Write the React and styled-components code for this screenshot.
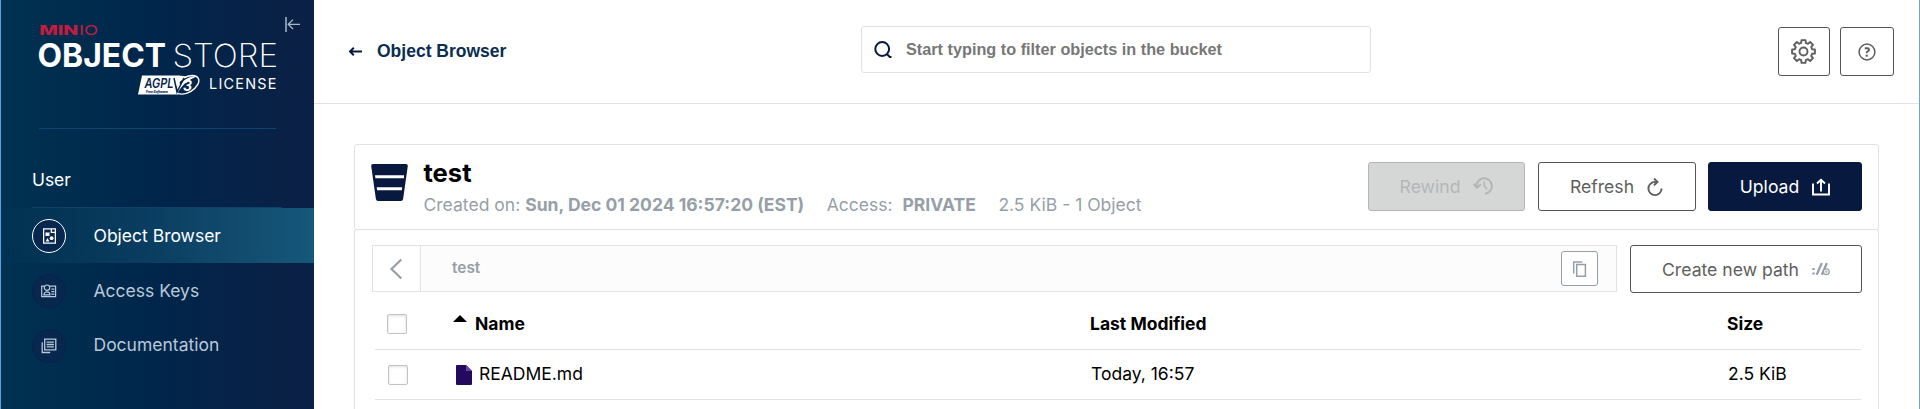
import React from 'react';
import styled, { createGlobalStyle } from 'styled-components';

const Global = createGlobalStyle`
  * { box-sizing: border-box; }
  body { margin: 0; font-family: Inter, sans-serif; font-size: 17.5px; overflow: hidden; background: #fff; }
  button, input { font: inherit; }
`;

const Page = styled.div`
  display: flex;
  height: 409px;
  border-left: 1px solid #4da5e8;
  border-right: 1px solid #6ba6d8;
`;

const Sidebar = styled.aside`
  width: 313px;
  flex: none;
  display: flex;
  flex-direction: column;
  background: linear-gradient(90deg, #003250 0%, #00264b 48%, #0b2044 100%);
`;

const Brand = styled.div`
  height: 129px;
  margin: 0 38px;
  border-bottom: 1px solid #0d4572;
  position: relative;
`;

const LogoSvg = styled.svg`
  display: block;
  overflow: visible;
`;

const Collapse = styled.svg`
  position: absolute;
  left: 246px;
  top: 17px;
`;

const SectionTitle = styled.div`
  height: 79px;
  margin: 0 32px 0 31px;
  padding-top: 40px;
  line-height: 22px;
  font-size: 17.4px;
  color: #fff;
  border-bottom: 1px solid #123f6c;
`;

const NavItem = styled.a`
  height: 55px;
  display: flex;
  align-items: center;
  gap: 27.5px;
  padding-left: 31px;
  font-size: 17.5px;
  color: ${(p) => (p.$active ? '#fff' : '#b8c8d8')};
  background: ${(p) => (p.$active ? 'linear-gradient(90deg, rgba(21,87,122,0) 0%, #15587a 100%)' : 'none')};
`;

const NavLabel = styled.span`
  padding-bottom: ${(p) => (p.$raised ? 2 : 0)}px;
`;

const NavIcon = styled.span`
  width: 34px;
  height: 34px;
  display: grid;
  place-items: center;
  border-radius: 50%;
  background: #07274e;
  border: 1px solid ${(p) => (p.$active ? '#fff' : '#08234a')};
`;

const Main = styled.main`
  flex: 1;
  min-width: 0;
  display: flex;
  flex-direction: column;
`;

const TopBar = styled.header`
  height: 104px;
  flex: none;
  display: grid;
  grid-template-columns: 547px 510px 1fr;
  align-items: start;
  border-bottom: 1px solid #e2e2e2;
`;

const PageTitle = styled.div`
  display: flex;
  align-items: center;
  gap: 15px;
  padding: 39px 0 0 34px;
  font: bold 17.5px/24px 'Liberation Sans', sans-serif;
  color: #0b2d50;
`;

const Search = styled.label`
  height: 47px;
  margin-top: 26px;
  display: flex;
  align-items: center;
  gap: 14px;
  padding: 0 12px;
  border: 1px solid #e2e2e2;
  border-radius: 3px;
`;

const SearchInput = styled.input`
  flex: 1;
  border: 0;
  padding: 0;
  outline: 0;
  font: bold 16.25px 'Liberation Sans', sans-serif;
  &::placeholder { color: #777; opacity: 1; }
`;

const TopActions = styled.div`
  display: flex;
  justify-content: flex-end;
  gap: 10px;
  padding: 27px 25px 0 0;
`;

const palette = {
  plain: { edge: '#545454', fill: '#fff', ink: '#5e5e5e' },
  disabled: { edge: '#b4b6b6', fill: '#d5d7d7', ink: '#b4b6b6' },
  primary: { edge: '#07193e', fill: '#07193e', ink: '#fff' },
};

const Button = styled.button`
  width: ${(p) => p.$width}px;
  height: ${(p) => p.$height || 49}px;
  padding: 0;
  display: flex;
  align-items: center;
  justify-content: center;
  gap: 13px;
  border: 1px solid ${(p) => palette[p.$kind || 'plain'].edge};
  border-radius: 3px;
  background: ${(p) => palette[p.$kind || 'plain'].fill};
  color: ${(p) => palette[p.$kind || 'plain'].ink};
  font-size: 17.6px;
  white-space: nowrap;
`;

const Panel = styled.section`
  flex: 1;
  margin: 40px 40px 0;
  display: flex;
  flex-direction: column;
`;

const BucketHeader = styled.div`
  height: 86px;
  flex: none;
  display: flex;
  align-items: flex-start;
  padding: 17px 16px 0;
  border: 1px solid #e2e2e2;
  border-radius: 3px;
`;

const BucketSvg = styled.svg`
  margin-top: 2px;
`;

const BucketInfo = styled.div`
  flex: 1;
  margin-left: 15.5px;
`;

const BucketName = styled.h1`
  margin: -4px 0 0;
  font-size: 25.6px;
  line-height: 30px;
  font-weight: 700;
  color: #000;
`;

const Meta = styled.div`
  display: flex;
  gap: 22.5px;
  margin-top: 5px;
  line-height: 24px;
  font-size: 17.55px;
  color: #969fa8;
  white-space: pre;
`;

const Actions = styled.div`
  display: flex;
  gap: 12.5px;
`;

const Body = styled.div`
  flex: 1;
  margin-top: -1px;
  padding: 15px 16px 0 17px;
  border: 1px solid #e2e2e2;
  border-bottom: 0;
  border-radius: 3px 3px 0 0;
`;

const PathRow = styled.div`
  display: flex;
  align-items: flex-start;
  justify-content: space-between;
`;

const Breadcrumb = styled.div`
  width: 1245px;
  height: 47px;
  display: flex;
  align-items: center;
  border: 1px solid #e2e2e2;
  background: #fcfcfc;
`;

const Back = styled.span`
  width: 48px;
  height: 45px;
  padding-right: 2px;
  display: grid;
  place-items: center;
  background: #fff;
  border-right: 1px solid #e2e2e2;
`;

const Crumb = styled.span`
  flex: 1;
  padding: 0 0 2px 31px;
  font-size: 15.4px;
  font-weight: 600;
  color: #969fa8;
`;

const CopyButton = styled.button`
  width: 37px;
  height: 35px;
  margin-right: 18px;
  padding: 0 1px 0 0;
  display: grid;
  place-items: center;
  background: #fff;
  border: 1px solid #969fa8;
  border-radius: 3px;
`;

const Row = styled.div`
  height: ${(p) => (p.$head ? 57 : 50)}px;
  margin: 0 1px 0 3px;
  display: grid;
  grid-template-columns: 66px 637px 637px 1fr;
  align-items: center;
  padding-left: ${(p) => (p.$head ? 12 : 13)}px;
  padding-top: ${(p) => (p.$head ? 6 : 0)}px;
  border-bottom: 1px solid #e2e2e2;
  font-weight: ${(p) => (p.$head ? 700 : 400)};
  color: #000;
`;

const Cell = styled.span`
  padding-bottom: 2px;
`;

const NameCell = styled.div`
  display: flex;
  align-items: center;
  gap: ${(p) => p.$gap}px;
  padding-left: ${(p) => p.$inset || 0}px;
`;

const Check = styled.span`
  width: 20px;
  height: 20px;
  border: 1px solid #c3c3c3;
  border-radius: 2px;
  box-shadow: inset 0 1px 3px rgba(0, 0, 0, 0.12);
`;

const SortArrow = styled.svg`
  margin-bottom: 12px;
`;

const Logo = () => (
  <LogoSvg width="237" height="100" viewBox="39 0 237 100">
    <g fill="#c51b3f" fontFamily="Inter" fontSize="13.4">
      <text x="39.3" y="34.8" fontWeight="800" textLength="39" lengthAdjust="spacingAndGlyphs">MIN</text>
      <text x="79" y="34.8" fontWeight="400" textLength="19" lengthAdjust="spacingAndGlyphs">IO</text>
    </g>
    <g fill="#fff" fontFamily="Inter" fontSize="32">
      <text x="37.5" y="67.3" fontWeight="700" textLength="128.5" lengthAdjust="spacingAndGlyphs">OBJECT</text>
      <text x="172.5" y="67.3" fontWeight="200" textLength="105.5" lengthAdjust="spacingAndGlyphs">STORE</text>
    </g>
    <text x="209" y="89.3" fill="#fff" fontFamily="Inter" fontSize="14.4" textLength="67.5">LICENSE</text>
    <path d="M142 75.4h37l8 1-3 14-6 4h-40z" fill="#fff" />
    <ellipse cx="187" cy="84.8" rx="13" ry="7.6" transform="rotate(-31 187 84.8)" fill="#052449" stroke="#fff" strokeWidth="1.4" />
    <path d="M175 77l3 15c5-8 10-12 20-16-8 0-14 3-18 9l-1-8z" fill="#fff" />
    <g fill="#052449" fontFamily="Inter" fontStyle="italic">
      <text x="144.5" y="88.3" fontSize="13" fontWeight="600" textLength="29" lengthAdjust="spacingAndGlyphs">AGPL</text>
      <text x="146" y="92.7" fontSize="3.6" fontWeight="800" textLength="22" lengthAdjust="spacingAndGlyphs">Free Software</text>
    </g>
    <path d="M174 78l3 14 7-14" fill="none" stroke="#052449" strokeWidth="1.5" />
    <text x="183" y="91" fill="#fff" fontFamily="Inter" fontSize="14" fontWeight="700" fontStyle="italic">3</text>
  </LogoSvg>
);

const CollapseIcon = () => (
  <Collapse width="16" height="15" fill="none" stroke="#a9b8c7" strokeWidth="1.3">
    <path d="M1 0v15" stroke="#8094a8" strokeWidth="2" />
    <path d="M15 7.3H3.2M8 2.6L3.2 7.3 8 12" />
  </Collapse>
);

const BrowserIcon = () => (
  <svg width="13" height="16" fill="none" stroke="#fff" strokeWidth="1.3">
    <path d="M.6.9h11.8v14.2H.6z" />
    <path d="M8.3 1v3.4h4" />
    <path d="M2.5 4.5h4v3.500h-4zM2.600 13.500l1.900-3.400 1.900 3.400z" fill="#fff" stroke="none" />
    <circle cx="8.600" cy="10.200" r="1.900" fill="#fff" stroke="none" />
  </svg>
);

const KeysIcon = () => (
  <svg width="16" height="14" fill="none" stroke="#b8c8d8" strokeWidth="1.2">
    <path d="M3 2.1H.7v10.5h13.9V2.1H9" />
    <circle cx="6" cy="3.7" r="2.7" fill="#07274e" />
    <path d="M2.8 10.9c0-4 6.2-4 6.2 0zM10.3 5.1h3.2M10.3 7.6h3.2M10.3 10.1h3.2" />
  </svg>
);

const DocsIcon = () => (
  <svg width="16" height="16" fill="none" stroke="#b8c8d8" strokeWidth="1.3">
    <path d="M3.7 1.2h11.1v10.6H3.7zM1.2 4.2v10.3h8M5.6 4.1h7.3M5.6 6.5h7.3M5.6 8.9h7.3" />
  </svg>
);

const gearOutline = Array.from({ length: 8 }, (_, i) =>
  [[-15, 8.9], [-10, 11.6], [10, 11.6], [15, 8.9]].map(([offset, r]) => {
    const a = ((i * 45 + offset) * Math.PI) / 180;
    return `${(12.5 + r * Math.sin(a)).toFixed(2)},${(12.5 - r * Math.cos(a)).toFixed(2)}`;
  }).join(' ')
).join(' ');

const GearIcon = () => (
  <svg width="26" height="25" fill="none" stroke="#5e5e5e" strokeWidth="1.9" strokeLinejoin="round">
    <polygon points={gearOutline} />
    <circle cx="12.5" cy="12.5" r="4" />
  </svg>
);

const HelpIcon = () => (
  <svg width="18" height="18" fill="none" stroke="#5e5e5e">
    <circle cx="9" cy="9" r="7.9" strokeWidth="1.5" />
    <path d="M6.8 5.3h2.7c2 0 2 2.900.2 3.100-.9.1-1 .5-1 1.900" strokeWidth="1.9" />
    <path d="M8.7 11.700v2" strokeWidth="2.1" />
  </svg>
);

const SearchIcon = () => (
  <svg width="18" height="18" fill="none" stroke="#07193e" strokeWidth="2">
    <circle cx="8.2" cy="8" r="6.9" />
    <path d="M12.6 12.7l3.2 3.2h1.7" />
  </svg>
);

const ArrowLeft = () => (
  <svg width="14" height="10" fill="none" stroke="#07193e" strokeWidth="2">
    <path d="M14 5.5H2.5M5.8 1.8L2 5.5l3.8 3.7" strokeLinejoin="round" />
  </svg>
);

const BucketIcon = () => (
  <BucketSvg width="37" height="37">
    <path d="M2 0h33q2 0 1.8 2l-4.7 33q-.3 2-2.2 2H7.1Q5.2 37 4.9 35L.2 2Q0 0 2 0z" fill="#07193e" />
    <path d="M4 11.3h29v3H4.4zM5.7 23.3h25.5l-.4 3H6.1z" fill="#fff" />
  </BucketSvg>
);

const RewindIcon = () => (
  <svg width="20" height="22" fill="none" stroke="currentColor" strokeWidth="2">
    <path d="M3.5 10.5A7.7 7.7 0 1 1 12 17.7" />
    <path d="M.6 7.7l3.2 4 3.9-3.5" />
    <path d="M11.3 5.5v4.8l2.8 2.8" strokeWidth="1.5" />
  </svg>
);

const RefreshIcon = () => (
  <svg width="16" height="20" fill="none" stroke="currentColor" strokeWidth="1.9">
    <path d="M9.5 4.9H8a6.6 6.6 0 1 0 6.6 6.6" />
    <path d="M7 1.5l3.5 3.4L7 8.3" />
  </svg>
);

const UploadIcon = () => (
  <svg width="18" height="18" fill="none" stroke="currentColor" strokeWidth="1.9">
    <path d="M1 5.5v11h16v-11" />
    <path d="M9 13.5V2M5 5.5L9 1.7l4 3.8" />
  </svg>
);

const PathIcon = () => (
  <svg width="18" height="14" fill="none" stroke="#969fa8" strokeWidth="2.2">
    <path d="M.3 7h2.4M.3 11.5h2.4M4.7 12.8L9.8 1M9.8 12.8L14.900 1" />
    <circle cx="14.3" cy="9.8" r="2.9" fill="#fff" strokeWidth="1.2" />
    <path d="M12.9 9.8h2.8M14.3 8.4v2.8" strokeWidth=".8" />
  </svg>
);

const ChevronLeft = () => (
  <svg width="14" height="22" fill="none" stroke="#969fa8" strokeWidth="2.2">
    <path d="M12.3 1.5L2.5 11l9.8 9.5" />
  </svg>
);

const CopyIcon = () => (
  <svg width="15" height="16" fill="none" stroke="#969fa8" strokeWidth="1.5">
    <path d="M4.7 3.6h8.7v11.6H4.7zM1.7 12.6V.9h8.7" />
  </svg>
);

const FileIcon = () => (
  <svg width="16" height="20">
    <path d="M1 0h9l6 6v13q0 1-1 1H1q-1 0-1-1V1q0-1 1-1z" fill="#240a5e" />
    <path d="M10 0l6 6h-6z" fill="#6446a8" />
  </svg>
);

export default function App() {
  return (
    <>
      <Global />
      <Page>
        <Sidebar>
          <Brand><Logo /><CollapseIcon /></Brand>
          <SectionTitle>User</SectionTitle>
          <NavItem $active><NavIcon $active><BrowserIcon /></NavIcon><NavLabel>Object Browser</NavLabel></NavItem>
          <NavItem><NavIcon><KeysIcon /></NavIcon><NavLabel>Access Keys</NavLabel></NavItem>
          <NavItem><NavIcon><DocsIcon /></NavIcon><NavLabel $raised>Documentation</NavLabel></NavItem>
        </Sidebar>
        <Main>
          <TopBar>
            <PageTitle><ArrowLeft />Object Browser</PageTitle>
            <Search><SearchIcon /><SearchInput placeholder="Start typing to filter objects in the bucket" /></Search>
            <TopActions>
              <Button $width={52}><GearIcon /></Button>
              <Button $width={54}><HelpIcon /></Button>
            </TopActions>
          </TopBar>
          <Panel>
            <BucketHeader>
              <BucketIcon />
              <BucketInfo>
                <BucketName>test</BucketName>
                <Meta>
                  <span>Created on: <b>Sun, Dec 01 2024 16:57:20 (EST)</b></span>
                  <span>Access:  <b>PRIVATE</b></span>
                  <span>2.5 KiB - 1 Object</span>
                </Meta>
              </BucketInfo>
              <Actions>
                <Button $kind="disabled" $width={157}>Rewind<RewindIcon /></Button>
                <Button $width={158}>Refresh<RefreshIcon /></Button>
                <Button $kind="primary" $width={154}>Upload<UploadIcon /></Button>
              </Actions>
            </BucketHeader>
            <Body>
              <PathRow>
                <Breadcrumb>
                  <Back><ChevronLeft /></Back>
                  <Crumb>test</Crumb>
                  <CopyButton><CopyIcon /></CopyButton>
                </Breadcrumb>
                <Button $width={232} $height={48}>Create new path<PathIcon /></Button>
              </PathRow>
              <Row $head>
                <Check />
                <NameCell $gap={8}>
                  <SortArrow width="14" height="7"><path d="M0 7 7 0l7 7z" /></SortArrow><Cell>Name</Cell>
                </NameCell>
                <Cell>Last Modified</Cell>
                <Cell>Size</Cell>
              </Row>
              <Row>
                <Check />
                <NameCell $gap={7} $inset={2}><FileIcon /><Cell>README.md</Cell></NameCell>
                <Cell>Today, 16:57</Cell>
                <Cell>2.5 KiB</Cell>
              </Row>
            </Body>
          </Panel>
        </Main>
      </Page>
    </>
  );
}
